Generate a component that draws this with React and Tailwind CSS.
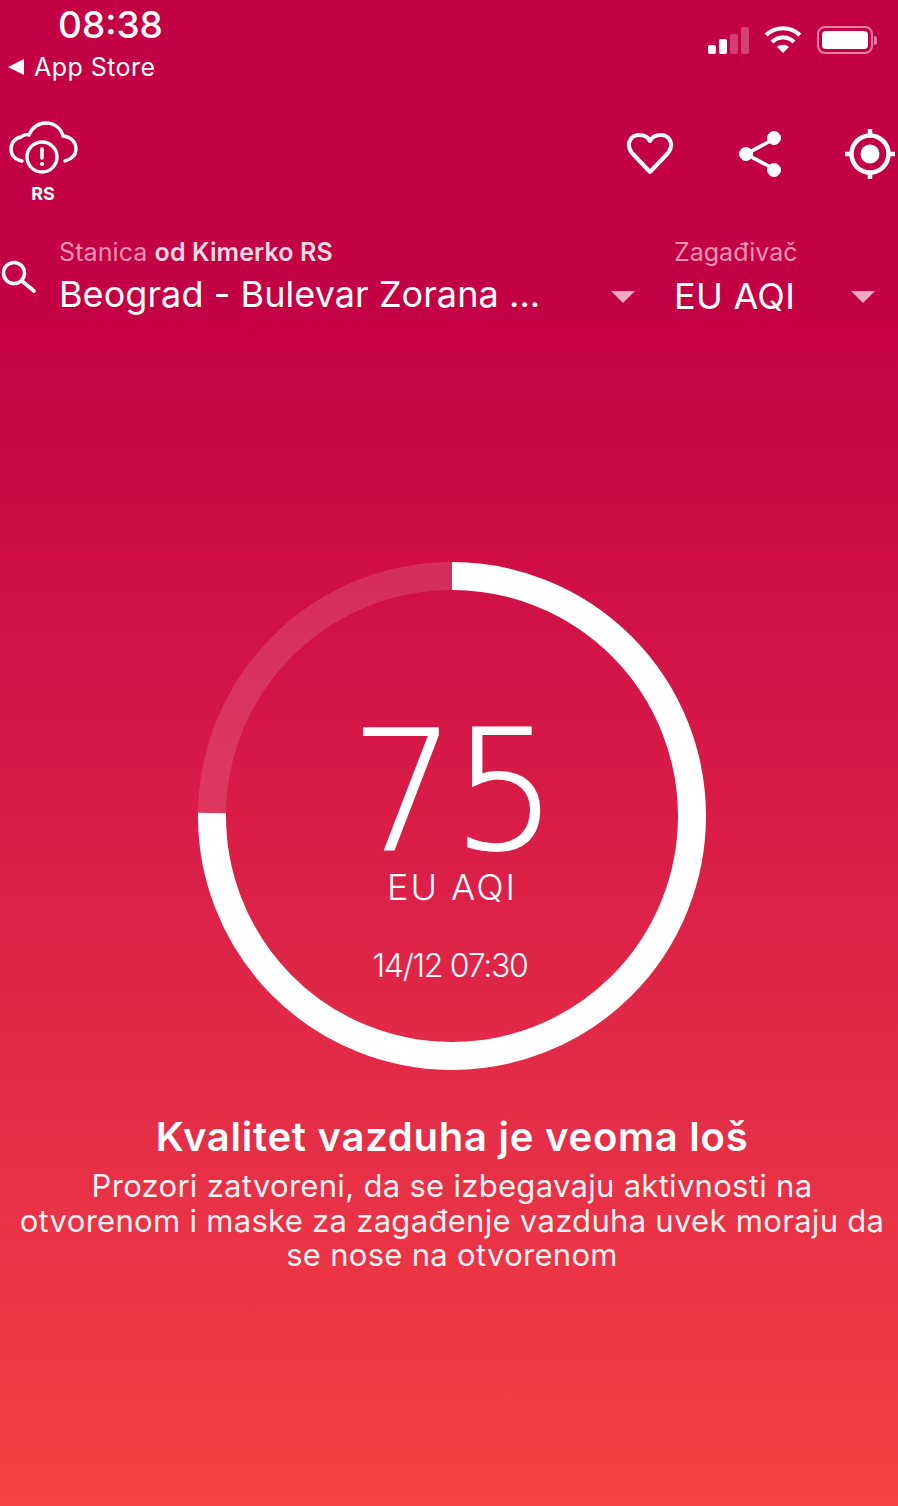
const CloudAlert = () => (
  <svg width="70" height="58" viewBox="0 0 70 58" fill="none" stroke="white" strokeWidth="3.4" strokeLinecap="round" strokeLinejoin="round">
    <path d="M13 41 C6 40 2 35 2 29 C2 23 6 18 12 17 C14 15 18 14 20 15 C23 7 30 3 37 3 C45 3 52 8 54 16 C62 17 67 22 67 29 C67 35 63 39 56 41" />
    <circle cx="33" cy="37" r="15" />
    <path d="M33 29 V38" strokeWidth="3.6" />
    <circle cx="33" cy="44" r="1.2" fill="white" strokeWidth="1.8" />
  </svg>
);

const Heart = () => (
  <svg width="48" height="44" viewBox="0 0 48 44" fill="none" stroke="white" strokeWidth="4" strokeLinejoin="round">
    <path d="M24 40 L6 21 C-1 12 5 3 13 3 C18 3 22 5 24 9 C26 5 30 3 35 3 C43 3 49 12 42 21 Z" />
  </svg>
);

const Share = () => (
  <svg width="44" height="48" viewBox="0 0 44 48" fill="white" stroke="white">
    <path d="M35 9 L7 24 L35 39" fill="none" strokeWidth="3.6" />
    <circle cx="35" cy="8" r="6.5" />
    <circle cx="7" cy="24" r="6.5" />
    <circle cx="35" cy="40" r="6.5" />
  </svg>
);

const Target = () => (
  <svg width="52" height="52" viewBox="0 0 52 52" fill="none" stroke="white">
    <circle cx="26" cy="26" r="18.5" strokeWidth="4.5" />
    <circle cx="26" cy="26" r="9.5" fill="white" stroke="none" />
    <path d="M26 1 V8 M26 44 V51 M1 26 H8 M44 26 H51" strokeWidth="4.5" />
  </svg>
);

const Search = () => (
  <svg width="36" height="34" viewBox="0 0 36 34" fill="none" stroke="white" strokeWidth="3.6" strokeLinecap="round">
    <circle cx="13" cy="13" r="10.5" />
    <path d="M21 21 L33 31" />
  </svg>
);

const Caret = () => <div className="mt-[6px] w-0 h-0 border-l-[12px] border-r-[12px] border-t-[12px] border-l-transparent border-r-transparent border-t-[#f3a9c1]" />;

const StatusIcons = () => (
  <div className="flex items-center gap-[15px]">
    <div className="flex items-end gap-[3px] h-[27px]">
      <div className="w-[8px] h-[9px] rounded-[2px] bg-white" />
      <div className="w-[8px] h-[15px] rounded-[2px] bg-white" />
      <div className="w-[8px] h-[20px] rounded-[2px] bg-white/25" />
      <div className="w-[8px] h-[27px] rounded-[2px] bg-white/25" />
    </div>
    <svg width="38" height="28" viewBox="0 0 38 28" fill="none" stroke="white" strokeWidth="4.2">
      <path d="M2 9 C12 0 26 0 36 9" />
      <path d="M8 16 C14 10 24 10 30 16" />
      <path d="M19 27 L13 21 C16 18 22 18 25 21 Z" fill="white" strokeWidth="0" />
    </svg>
    <div className="flex items-center gap-[1px]">
      <div className="w-[56px] h-[28px] rounded-[8px] border-2 border-white/50 p-[3px]">
        <div className="w-full h-full rounded-[4px] bg-white" />
      </div>
      <div className="w-[3px] h-[9px] rounded-r-full bg-white/50" />
    </div>
  </div>
);

const Ring = () => (
  <div className="relative w-[508px] h-[508px]">
    <svg width="508" height="508" viewBox="0 0 508 508" fill="none" strokeWidth="28">
      <path d="M254 14 A240 240 0 0 0 14 251" stroke="white" strokeOpacity="0.13" />
      <path d="M254 14 A240 240 0 1 1 14 251" stroke="white" />
    </svg>
    <div className="absolute inset-0 flex flex-col items-center text-white">
      <div className="mt-[160px] h-[140px] text-[166px] leading-[140px] font-extralight tracking-[-4px] [-webkit-text-stroke:2px_white] font-['DejaVu_Sans',sans-serif]">75</div>
      <div className="mt-[3px] h-[44px] text-[36px] leading-[44px] font-light tracking-[2px] font-['Inter',sans-serif]">EU AQI</div>
      <div className="mt-[37px] mr-[4px] h-[40px] text-[32px] leading-[40px] font-light tracking-[-1.3px] font-['Inter',sans-serif]">14/12 07:30</div>
    </div>
  </div>
);

export default function App() {
  return (
    <div className="w-[898px] h-[1506px] overflow-hidden flex flex-col text-white font-['Inter',sans-serif] bg-[linear-gradient(180deg,#c40044_0%,#c40044_20%,#e22a48_70%,#f54242_100%)]">
      {/* status bar */}
      <div className="flex justify-between h-[88px] pr-[21px]">
        <div className="pl-[8px]">
          <div className="pl-[50px] pt-[3px] h-[47px] text-[37px] leading-[44px] font-medium">08:38</div>
          <div className="flex items-center gap-[10px] h-[40px]">
            <div className="w-0 h-0 border-t-[8px] border-b-[8px] border-r-[16px] border-t-transparent border-b-transparent border-r-white" />
            <span className="text-[25px] leading-[30px] tracking-[0.45px]">App Store</span>
          </div>
        </div>
        <div className="pt-[26px]"><StatusIcons /></div>
      </div>

      {/* toolbar */}
      <div className="flex justify-between items-start h-[149px] pt-[32px] pl-[9px] pr-[2px]">
        <div className="flex flex-col items-center">
          <CloudAlert />
          <span className="-ml-[2px] mt-[5px] text-[18px] leading-[22px] font-bold">RS</span>
        </div>
        <div className="flex items-center gap-[63px] pt-[8px]">
          <Heart />
          <div className="ml-[2px] -mr-[2px]"><Share /></div>
          <Target />
        </div>
      </div>

      {/* selectors */}
      <div className="flex items-start pl-[1px] pr-[23px]">
        <div className="pt-[23px] w-[58px] shrink-0"><Search /></div>
        <div className="w-[576px] shrink-0">
          <div className="text-[25px] leading-[30px] tracking-[0.1px] text-[#f393b4]">Stanica <span className="font-semibold text-[#fbdbe5]">od Kimerko RS</span></div>
          <div className="flex items-center justify-between mt-[3px]">
            <span className="text-[36px] leading-[48px] tracking-[0.07px]">Beograd - Bulevar Zorana ...</span>
            <Caret />
          </div>
        </div>
        <div className="flex-1 pl-[39px]">
          <div className="text-[25px] leading-[30px] text-[#f393b4]">Zagađivač</div>
          <div className="flex items-center justify-between mt-[5px]">
            <span className="text-[36px] leading-[48px] tracking-[0.3px]">EU AQI</span>
            <div className="-mt-[4px]"><Caret /></div>
          </div>
        </div>
      </div>

      {/* gauge */}
      <div className="flex justify-center pl-[6px] mt-[242px]"><Ring /></div>

      {/* message */}
      <div className="flex flex-col items-center mt-[44px] pl-[6px] text-center">
        <h1 className="text-[40px] leading-[46px] font-semibold tracking-[0.75px]">Kvalitet vazduha je veoma loš</h1>
        <p className="mt-[9px] text-[31px] leading-[34.5px] text-white/95 tracking-[0.3px] whitespace-nowrap">
          Prozori zatvoreni, da se izbegavaju aktivnosti na<br />
          otvorenom i maske za zagađenje vazduha uvek moraju da<br />
          se nose na otvorenom
        </p>
      </div>
    </div>
  );
}
